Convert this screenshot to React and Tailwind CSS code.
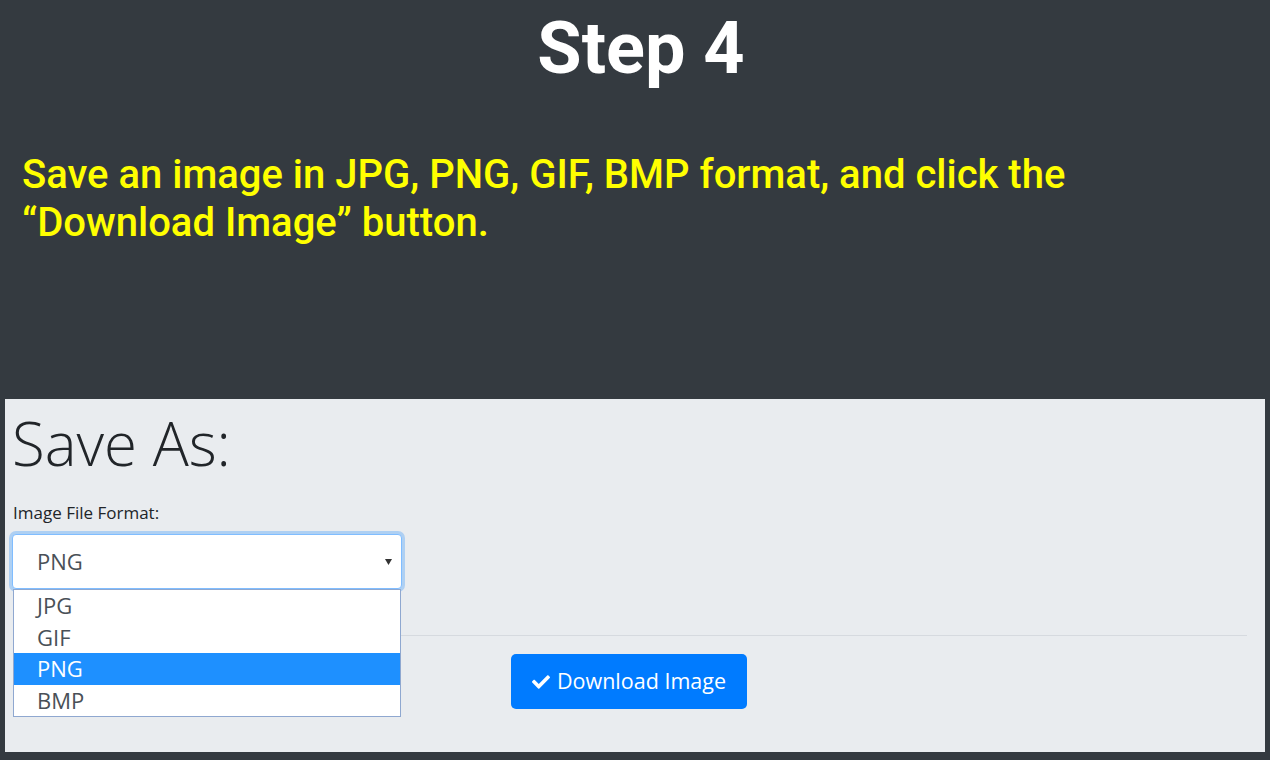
import React from "react";
import { FaCheck } from "react-icons/fa";

export default function App() {
  const options = ["JPG", "GIF", "PNG", "BMP"];
  return (
    <div className="w-[1270px] h-[760px] bg-[#343a40] flex flex-col overflow-hidden">
      <div className="h-[399px] flex flex-col">
        <h1
          className="text-white text-center font-bold text-[72px] leading-none pt-[13px] pl-[12px]"
          style={{ fontFamily: "Roboto, sans-serif" }}
        >
          Step 4
        </h1>
        <p
          className="text-[#ffff00] font-medium text-[40px] leading-[48px] pl-[22px] pt-[66px] pr-[150px]"
          style={{ fontFamily: "Roboto, sans-serif" }}
        >
          Save an image in JPG, PNG, GIF, BMP format, and click the “Download Image” button.
        </p>
      </div>
      <div
        className="mx-[5px] h-[353px] bg-[#e9ecef] relative pl-[7px] pr-[18px]"
        style={{ fontFamily: "'Open Sans', sans-serif" }}
      >
        <h2 className="text-[60px] font-light text-[#212529] leading-none pt-[14px]">Save As:</h2>
        <div className="text-[17px] text-[#212529] mt-[27px] leading-[25px] pl-[1px]">Image File Format:</div>
        <div className="relative w-[390px] mt-[9px]">
          <div className="h-[55px] bg-white border border-[#80bdff] rounded-[4px] shadow-[0_0_0_3px_rgba(0,123,255,0.25)] flex items-center pl-[24px] pr-[9px] text-[22px] text-[#495057]">
            <span className="flex-1">PNG</span>
            <svg width="7" height="6" viewBox="0 0 7 6">
              <polygon points="0,0 7,0 3.5,6" fill="#333" />
            </svg>
          </div>
          <div className="absolute left-[1px] top-[55px] w-[388px] bg-white border border-[#8fa8d0] z-10">
            {options.map((o) => (
              <div
                key={o}
                className={
                  o === "PNG"
                    ? "h-[31.5px] flex items-center pl-[23px] text-[22px] bg-[#1e90ff] text-white"
                    : "h-[31.5px] flex items-center pl-[23px] text-[22px] bg-white text-[#495057]"
                }
              >
                {o}
              </div>
            ))}
          </div>
        </div>
        <hr className="border-0 border-t border-[#d6dadf] mt-[46px] ml-[1px]" />
        <div className="pl-[499px] pt-[18px]">
          <button className="h-[55px] w-[236px] bg-[#007bff] rounded-[5px] text-white text-[21.5px] flex items-center justify-center gap-[7px]">
            <FaCheck className="text-[18px]" />
            <span>Download Image</span>
          </button>
        </div>
      </div>
    </div>
  );
}
